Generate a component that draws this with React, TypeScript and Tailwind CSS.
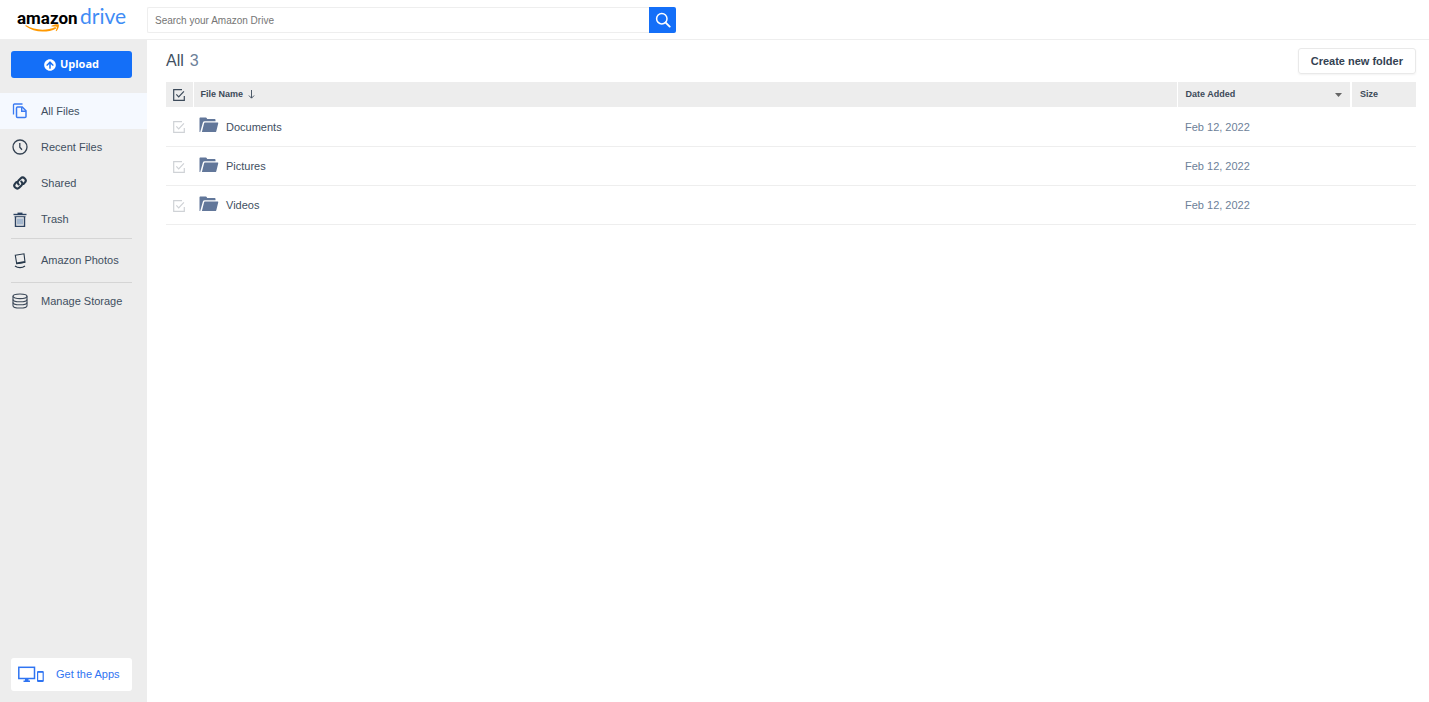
import { ReactNode } from "react";
import { FaArrowCircleUp } from "react-icons/fa";

const files = [
	{ name: "Documents", date: "Feb 12, 2022" },
	{ name: "Pictures", date: "Feb 12, 2022" },
	{ name: "Videos", date: "Feb 12, 2022" },
];

function Logo() {
	return (
		<a href="#home" aria-label="Amazon Drive" className="block">
			<svg width="114" height="34" viewBox="0 0 114 34">
				<text
					x="1"
					y="24"
					className="fill-black font-['Roboto',sans-serif] text-[17px] font-bold"
				>
					amazon
				</text>
				<text
					x="64"
					y="24"
					className="fill-[#3f8cf5] font-['Lato',sans-serif] text-[21px]"
				>
					drive
				</text>
				<path
					d="M10.200 25.300c8.500 5.200 20.300 5.700 29.200 1.600l.9 1.500c-9.300 4.900-22.500 4.200-30.600-2.200-.7-.6-.2-1.300.5-.9z"
					fill="#ff9900"
				/>
				<path
					d="M35.600 25.800c2-1.700 6.700-2 7.200-1.200s-.2 4.700-2.300 6.400c-.4.300-.9.100-.7-.4.6-1.300 1.300-3.300.9-3.900s-2.900-.2-4.500-.1c-.7.100-1-.4-.6-.8z"
					fill="#ff9900"
				/>
			</svg>
		</a>
	);
}

function FilesIcon() {
	return (
		<svg width="16" height="16" viewBox="0 0 16 16" fill="none" stroke="#3b7bf2">
			<path d="M10.500 1H2.500A1 1 0 0 0 1.500 2v9.500" strokeWidth="1.300" />
			<path
				d="M5.500 4h4.700L14 7.800V13.500a1 1 0 0 1-1 1H5.500a1 1 0 0 1-1-1V5a1 1 0 0 1 1-1z"
				strokeWidth="1.500"
			/>
			<path d="M9.700 4v4.300H14" strokeWidth="1.400" />
		</svg>
	);
}

function ClockIcon() {
	return (
		<svg width="16" height="16" viewBox="0 0 16 16" fill="none" stroke="#344252">
			<circle cx="8" cy="8" r="7" strokeWidth="1.300" />
			<path d="M7.800 4v4.300l2.200 2.500" strokeWidth="1.300" />
		</svg>
	);
}

function LinkIcon() {
	return (
		<svg
			width="16"
			height="16"
			viewBox="0 0 16 16"
			fill="none"
			stroke="#27384a"
			strokeWidth="2.100"
			strokeLinecap="round"
		>
			<path d="M6.700 9.500a2.900 2.900 0 0 1-.1-4.100l2-2a2.900 2.900 0 0 1 4.100 0l.1.1a2.900 2.900 0 0 1 0 4.100l-1.300 1.300" />
			<path d="M9.300 6.500a2.900 2.900 0 0 1 .1 4.100l-2 2a2.900 2.900 0 0 1-4.100 0l-.1-.1a2.900 2.900 0 0 1 0-4.100l1.300-1.300" />
		</svg>
	);
}

function TrashIcon() {
	return (
		<svg width="16" height="16" viewBox="0 0 16 16" fill="none" stroke="#2c4260">
			<path d="M1.500 2.500h13" strokeWidth="1.400" />
			<path d="M5.500 1.400h5" strokeWidth="1.600" />
			<path d="M3.500 5v9.400h9V5" strokeWidth="1.400" />
			<path d="M2.500 4.700h11" strokeWidth="1" />
			<path d="M6 6.500v6M8 6.500v6M10 6.500v6" stroke="#5d82b0" />
		</svg>
	);
}

function PhotosIcon() {
	return (
		<svg width="16" height="16" viewBox="0 0 16 16" fill="none" stroke="#27384a">
			<path d="M3.300 2.300l8.700-1.500 1 8.400-8.300 1.500z" strokeWidth="1.100" />
			<path d="M4.500 9.400l8.300-1.500.2 1.800-8.300 1.500z" fill="#27384a" stroke="none" />
			<path d="M3 13c2.800 2.200 7.200 2.200 10 0" strokeWidth="1.200" />
		</svg>
	);
}

function StorageIcon() {
	return (
		<svg
			width="16"
			height="16"
			viewBox="0 0 16 16"
			fill="none"
			stroke="#3b4858"
			strokeWidth="1.100"
		>
			<ellipse cx="8" cy="3.300" rx="7" ry="2.300" />
			<path d="M1 3.300v9.400c0 1.300 3.100 2.300 7 2.300s7-1 7-2.300V3.300" />
			<path d="M1 6.400c0 1.300 3.100 2.300 7 2.300s7-1 7-2.300M1 9.500c0 1.300 3.100 2.300 7 2.300s7-1 7-2.300" />
		</svg>
	);
}

function DevicesIcon() {
	return (
		<svg width="27" height="17" viewBox="0 0 27 17" fill="none" stroke="#2f74f2">
			<rect x=".8" y="1.300" width="15.700" height="11.200" strokeWidth="1.500" />
			<path d="M7 13h3.500v1.500h1.500v1.500H5.500v-1.500H7z" fill="#2f74f2" stroke="none" />
			<rect x="19.600" y="5.600" width="5.600" height="9.900" rx=".8" strokeWidth="1.200" />
			<path d="M19.600 6h5.600M19.600 14.800h5.600" strokeWidth="1.400" />
		</svg>
	);
}

function FolderIcon() {
	return (
		<svg width="20" height="16" viewBox="0 0 20 16" fill="#62779a">
			<path d="M.5 1.500c0-.6.400-1 1-1h5.300c.5 0 .8.200 1 .7l.4.900h7.300c.6 0 1 .4 1 1v1.100H5.700c-.9 0-1.500.4-1.800 1.200L1.200 15H.5z" />
			<path d="M5.900 5.600h12.600c.6 0 .9.400.7 1l-1.900 7.600c-.2.600-.6.900-1.200.9H2.900l2.200-8.900c.1-.4.400-.6.800-.6z" />
		</svg>
	);
}

function TickBox({ label, className }: { label: string; className: string }) {
	return (
		<label className={`mx-auto grid w-3 ${className}`}>
			<input
				type="checkbox"
				aria-label={label}
				className="col-start-1 row-start-1 size-3 appearance-none"
			/>
			<svg
				width="12"
				height="12"
				viewBox="0 0 12 12"
				fill="none"
				stroke="currentColor"
				className="pointer-events-none col-start-1 row-start-1"
			>
				<path d="M9 .7H.7v10.600h10.600V7" strokeWidth="1.200" />
				<path d="M3.300 5.300l2.400 2.500 5.200-5.500" strokeWidth="1.200" />
			</svg>
		</label>
	);
}

type NavItemProps = { icon: ReactNode; text: string; className?: string };

function NavItem({ icon, text, className = "h-9" }: NavItemProps) {
	return (
		<a
			href="#"
			className={`flex items-center gap-[13px] pl-3 text-[11px] text-[#414f5f] ${className}`}
		>
			{icon}
			{text}
		</a>
	);
}

function Header() {
	return (
		<header className="flex h-10 border-b border-[#eeeeee] bg-white">
			<div className="w-[147px] shrink-0 pl-4">
				<Logo />
			</div>
			<form className="mt-[7px] flex h-[26px] w-[529px]">
				<input
					type="text"
					aria-label="Search your Amazon Drive"
					placeholder="Search your Amazon Drive"
					className="min-w-0 flex-1 rounded-l-xs border border-r-0 border-[#eeeeee] px-[7px] text-[10px] placeholder:text-[#757575]"
				/>
				<button
					type="button"
					aria-label="Search"
					className="flex w-[27px] items-center justify-center rounded-r-xs bg-[#146ff8]"
				>
					<svg
						width="16"
						height="16"
						viewBox="0 0 16 16"
						fill="none"
						stroke="#fff"
						strokeLinecap="round"
					>
						<circle cx="6.800" cy="6.700" r="5.200" strokeWidth="1.500" />
						<path d="M10.700 10.600l4 4" strokeWidth="1.900" />
					</svg>
				</button>
			</form>
		</header>
	);
}

function Sidebar() {
	return (
		<aside className="flex w-[147px] shrink-0 flex-col bg-[#ededed]">
			<button className="mt-[11px] mr-[15px] ml-[11px] flex h-[27px] items-center justify-center gap-1 rounded-[3px] bg-[#146ff8] font-['Open_Sans',sans-serif] text-[11px] font-bold text-white">
				<FaArrowCircleUp size={12} />
				Upload
			</button>
			<nav className="mt-[15px]">
				<NavItem icon={<FilesIcon />} text="All Files" className="h-9 bg-[#f5f9ff]" />
				<NavItem icon={<ClockIcon />} text="Recent Files" />
				<NavItem icon={<LinkIcon />} text="Shared" />
				<NavItem icon={<TrashIcon />} text="Trash" className="h-[37px]" />
				<hr className="mr-[15px] ml-[11px] border-[#d5d5d5]" />
				<NavItem icon={<PhotosIcon />} text="Amazon Photos" className="h-[43px]" />
				<hr className="mr-[15px] ml-[11px] border-[#d5d5d5]" />
				<NavItem icon={<StorageIcon />} text="Manage Storage" />
			</nav>
			<a
				href="#apps"
				className="mt-auto mr-[15px] mb-[11px] ml-[11px] flex h-[33px] items-center gap-[11px] rounded-[3px] bg-white pl-[7px] text-[11px] whitespace-nowrap text-[#2f74f2]"
			>
				<DevicesIcon />
				Get the Apps
			</a>
		</aside>
	);
}

function FileTable() {
	return (
		<table className="mt-2 w-full table-fixed border-collapse text-left">
			<colgroup>
				<col className="w-[27px]" />
				<col />
				<col className="w-[174px]" />
				<col className="w-[65px]" />
			</colgroup>
			<thead>
				<tr className="h-[25px] bg-[#ededed] text-[9px] text-[#3c4a5a]">
					<th className="pt-px">
						<TickBox label="Select all" className="text-[#3c4a5a]" />
					</th>
					<th className="border-l border-white pl-[7px]">
						<button className="flex items-center gap-[5px] font-bold">
							File Name
							<svg
								width="7"
								height="9"
								viewBox="0 0 7 9"
								fill="none"
								stroke="currentColor"
								strokeWidth=".9"
							>
								<path d="M3.500 0v8M.9 5.500l2.600 2.700 2.600-2.700" />
							</svg>
						</button>
					</th>
					<th className="border-l border-white px-2">
						<button className="flex w-full items-center justify-between font-bold">
							Date Added
							<svg width="7" height="4" viewBox="0 0 7 4" fill="#666">
								<path d="M0 0h7L3.500 4z" />
							</svg>
						</button>
					</th>
					<th className="border-l-2 border-white pl-2">Size</th>
				</tr>
			</thead>
			<tbody>
				{files.map((file) => (
					<tr
						key={file.name}
						className="h-[39px] border-b border-[#eeeeee] text-[11px]"
					>
						<td className="pt-0.5 pr-0.5">
							<TickBox
								label={`Select ${file.name}`}
								className="text-[#cfd2d6]"
							/>
						</td>
						<td className="pt-0.5 pl-[6px]">
							<a href="#" className="flex items-center gap-[7px] text-[#414f5f]">
								<span className="pb-1">
									<FolderIcon />
								</span>
								{file.name}
							</a>
						</td>
						<td className="pt-0.5 pl-2 text-[#6d7f99]">{file.date}</td>
						<td></td>
					</tr>
				))}
			</tbody>
		</table>
	);
}

export default function App() {
	return (
		<div className="flex min-h-screen flex-col bg-white font-['Liberation_Sans',Arial,sans-serif]">
			<Header />
			<div className="flex flex-1">
				<Sidebar />
				<main className="min-w-0 flex-1 pt-2 pr-[13px] pl-[19px]">
					<div className="flex h-[26px] items-center justify-between">
						<h1 className="flex gap-1.5 text-[16px] text-[#414f5f]">
							All <span className="text-[#6d7f99]">3</span>
						</h1>
						<button className="h-[26px] rounded-[3px] border border-[#e9e9e9] px-3 text-[11px] font-bold text-[#344252] shadow-xs">
							Create new folder
						</button>
					</div>
					<FileTable />
				</main>
			</div>
		</div>
	);
}
